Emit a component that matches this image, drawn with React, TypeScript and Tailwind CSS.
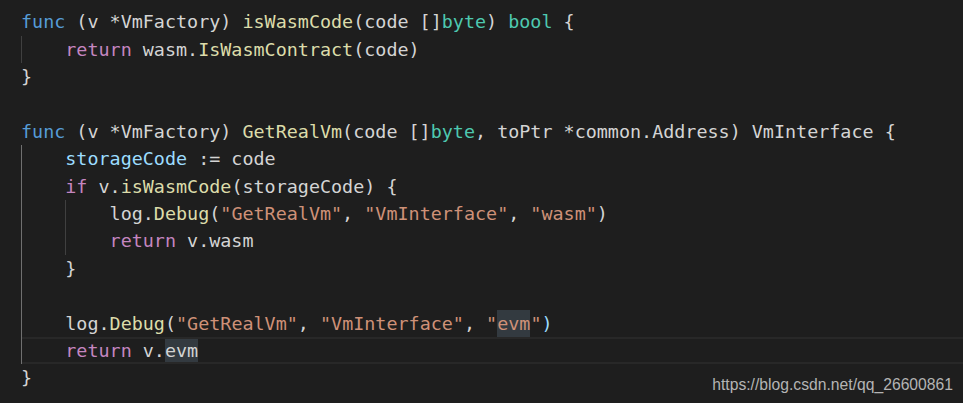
import React from 'react';

type Tok = [string, string];

interface CodeLine {
  guides: ('active' | 'idle')[];
  indent: number;
  toks: Tok[];
  current?: boolean;
}

const kw = 'text-[#569cd6]';
const ctl = 'text-[#c586c0]';
const fn = 'text-[#dcdcaa]';
const ty = 'text-[#4ec9b0]';
const str = 'text-[#ce9178]';
const vr = 'text-[#9cdcfe]';
const pl = 'text-[#d4d4d4]';
const hl = 'hl';

const lines: CodeLine[] = [
  {
    guides: [],
    indent: 0,
    toks: [['func', kw], [' (v *VmFactory) ', pl], ['isWasmCode', fn], ['(code []', pl], ['byte', ty], [') ', pl], ['bool', ty], [' {', pl]],
  },
  { guides: ['idle'], indent: 1, toks: [['return', ctl], [' wasm.', pl], ['IsWasmContract', fn], ['(code)', pl]] },
  { guides: [], indent: 0, toks: [['}', pl]] },
  { guides: [], indent: 0, toks: [] },
  {
    guides: [],
    indent: 0,
    toks: [['func', kw], [' (v *VmFactory) ', pl], ['GetRealVm', fn], ['(code []', pl], ['byte', ty], [', toPtr *common.Address) VmInterface {', pl]],
  },
  { guides: ['active'], indent: 1, toks: [['storageCode', vr], [' := code', pl]] },
  { guides: ['active'], indent: 1, toks: [['if', ctl], [' v.', pl], ['isWasmCode', fn], ['(storageCode) {', pl]] },
  {
    guides: ['active', 'idle'],
    indent: 2,
    toks: [['log.', pl], ['Debug', fn], ['(', pl], ['"GetRealVm"', str], [', ', pl], ['"VmInterface"', str], [', ', pl], ['"wasm"', str], [')', pl]],
  },
  { guides: ['active', 'idle'], indent: 2, toks: [['return', ctl], [' v.wasm', pl]] },
  { guides: ['active'], indent: 1, toks: [['}', pl]] },
  { guides: ['active'], indent: 1, toks: [] },
  {
    guides: ['active'],
    indent: 1,
    toks: [['log.', pl], ['Debug', fn], ['(', pl], ['"GetRealVm"', str], [', ', pl], ['"VmInterface"', str], [', ', pl], ['"', str], ['evm', str + ' ' + hl], ['"', str], [')', vr]],
  },
  { guides: ['active'], indent: 1, toks: [['return', ctl], [' v.', pl], ['evm', pl + ' ' + hl]], current: true },
  { guides: [], indent: 0, toks: [['}', pl]] },
];

const Tokens: React.FC<{ toks: Tok[] }> = ({ toks }) => (
  <>
    {toks.map(([text, cls], i) =>
      cls.includes(hl) ? (
        <span key={i} className={cls.replace(hl, '') + ' inline-block h-full bg-[#333a40]'}>
          {text}
        </span>
      ) : (
        <span key={i} className={cls}>
          {text}
        </span>
      ),
    )}
  </>
);

const Line: React.FC<{ line: CodeLine }> = ({ line }) => {
  if (line.current) {
    return (
      <div className="flex h-[27.4px]">
        <span className="w-px shrink-0 bg-[#707070]" />
        <div className="flex-1 border-y-2 border-[#282828] pl-[calc(4ch-1px)] leading-[23.4px] whitespace-pre">
          <Tokens toks={line.toks} />
        </div>
      </div>
    );
  }
  return (
    <div className="flex h-[27.4px] leading-[27.4px] whitespace-pre">
      {line.guides.map((g, i) => (
        <span
          key={i}
          className={'w-[4ch] shrink-0 border-l ' + (g === 'active' ? 'border-[#707070]' : 'border-[#404040]')}
        />
      ))}
      {Array.from({ length: line.indent - line.guides.length }).map((_, i) => (
        <span key={'p' + i} className="w-[4ch] shrink-0" />
      ))}
      <span>
        <Tokens toks={line.toks} />
      </span>
    </div>
  );
};

export default function App() {
  return (
    <div className="relative w-[963px] h-[403px] overflow-hidden bg-[#1e1e1e]">
      <div className="pt-[8.3px] pl-[21px] text-[18.4px] font-['DejaVu_Sans_Mono',monospace]">
        {lines.map((line, i) => (
          <Line key={i} line={line} />
        ))}
      </div>
      <div className="absolute right-[10px] bottom-[8px] text-[15.7px] leading-[20px] text-[#b4b4b4] font-['Liberation_Sans',Arial,sans-serif]">
        https://blog.csdn.net/qq_26600861
      </div>
    </div>
  );
}
